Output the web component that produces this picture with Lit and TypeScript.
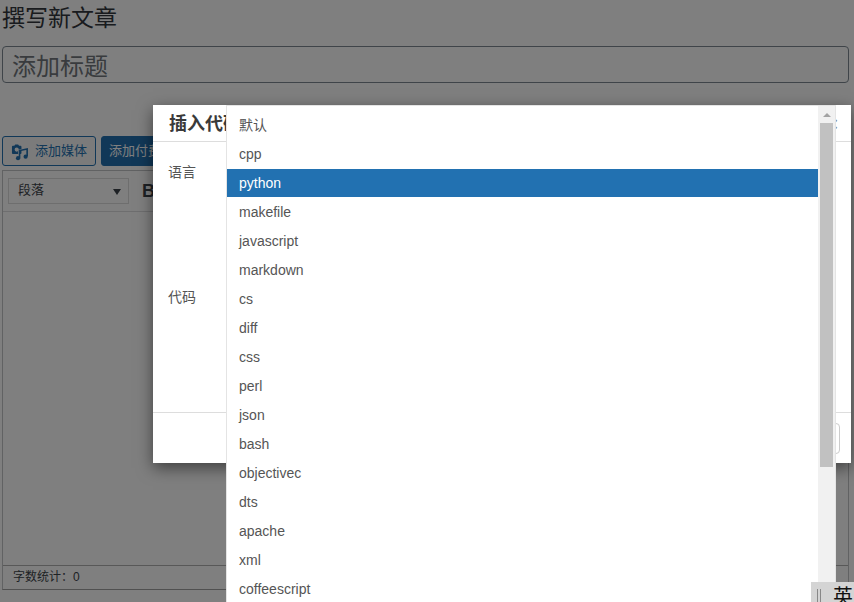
import { LitElement, html, css } from "lit";
import { customElement } from "lit/decorators.js";

const LANGS = ["默认","cpp","python","makefile","javascript","markdown","cs","diff","css","perl","json","bash","objectivec","dts","apache","xml","coffeescript"];

@customElement("app-root")
export class AppRoot extends LitElement {
  static styles = css`
    :host { display:block; position:relative; width:854px; height:602px; overflow:hidden; background:#fff;
      font-family:"Liberation Sans","Noto Sans CJK SC",sans-serif; color:#32373c; }
    * { box-sizing:border-box; }
    .page { padding:0 5px 0 2px; display:flex; flex-direction:column; height:602px; }
    h1 { margin:0; font-weight:400; font-size:23px; line-height:36px; height:46px; }
    .title { height:37px; border:1px solid #7e8993; border-radius:4px; font-size:24px; line-height:40px; padding-left:9px; color:#72777c; }
    .media { display:flex; gap:5px; margin-top:53px; height:30px; }
    .btn { height:30px; border:1px solid #2271b1; border-radius:3px; font-size:13px; line-height:28px; color:#2271b1; background:#f6f7f7; display:flex; align-items:center; }
    .btn.a { width:94px; padding-left:8px; gap:5px; }
    .btn.a svg { flex:none; }
    .btn.b { width:120px; padding-left:7px; background:#2271b1; color:#fff; }
    .editor { margin-top:4px; width:847px; height:420px; border:1px solid #c3c4c7; border-bottom-color:#a0a0a0; display:flex; flex-direction:column; }
    .tools { height:41px; border-bottom:1px solid #dcdcde; padding:7px 0 0 5px; display:flex; gap:13px; }
    .sel { width:121px; height:26px; border:1px solid #ddd; padding-left:9px; font-size:13px; line-height:21px; color:#3c434a; position:relative; }
    .sel::after { content:""; position:absolute; right:7px; top:10px; border:4px solid transparent; border-top:6px solid #3c434a; border-bottom:0; }
    .bold { font-weight:700; font-size:18px; line-height:26px; color:#3c434a; }
    .body { flex:1; }
    .status { height:24px; border-top:1px solid #b0b0b0; font-size:12px; line-height:23px; padding-left:10px; color:#3c434a; }
    .scrim { position:absolute; inset:0; background:rgba(0,0,0,.5); }
    .modal { position:absolute; left:153px; top:105px; width:698px; height:358px; background:#fff; box-shadow:0 5px 15px rgba(0,0,0,.5); display:flex; flex-direction:column; color:#555; }
    .mh { height:37px; border-bottom:1px solid #ddd; padding:1px 13px 0 16px; font-size:18px; font-weight:700; line-height:36px; color:#3a3a3a; display:flex; justify-content:space-between; }
    .mh span:last-child { font-size:21px; color:#888; }
    .mb { flex:1; padding:20px 15px; font-size:14px; line-height:20px; color:#555; display:flex; flex-direction:column; gap:105px; }
    .mf { height:51px; border-top:1px solid #ddd; display:flex; justify-content:flex-end; padding:10px 11px 0 0; }
    .cancel { width:40px; height:31px; border:1px solid #ccc; border-radius:4px; background:#fff; }
    .dd { position:absolute; left:226px; top:105px; width:610px; height:500px; background:#fff; border:1px solid #e4e4e4; border-width:1px 1px 0 1px; display:flex; }
    ul { list-style:none; margin:0; padding:5px 0 0; flex:1; }
    li { height:28px; margin-bottom:1px; padding-left:12px; font-size:14px; line-height:28px; color:#555; }
    li.on { background:#2271b1; color:#fff; }
    .sb { width:17px; background:#f1f1f1; padding:0 2px; display:flex; flex-direction:column; align-items:center; }
    .up { height:17px; display:flex; align-items:center; justify-content:center; width:100%; }
    .up i { border:4px solid transparent; border-bottom:4px solid #a3a3a3; border-top:0; width:0; display:block; }
    .thumb { width:13px; height:344px; background:#c1c1c1; }
    .ime { position:absolute; left:811px; top:582px; width:43px; height:20px; background:#d4d4d4; color:#111; display:flex; padding-left:6px; overflow:hidden; }
    .grip { width:4px; height:14px; margin-top:7px; border-left:1px solid #888; border-right:1px solid #888; }
    .ime b { font-weight:400; font-size:20px; line-height:30px; margin-left:12px; white-space:nowrap; }
  `;
  render() {
    return html`
      <div class="page">
        <h1>撰写新文章</h1>
        <div class="title">添加标题</div>
        <div class="media">
          <div class="btn a">
            <svg width="19" height="19" viewBox="0 0 20 20">
              <path fill="#2271b1" fill-rule="evenodd" d="M4.5 2.5h3l1 1.5h1.5a1 1 0 0 1 1 1v6.5a1 1 0 0 1-1 1H2a1 1 0 0 1-1-1V5a1 1 0 0 1 1-1h1.5zM6 5.8a2.2 2.2 0 1 0 0 4.4a2.2 2.2 0 0 0 0-4.4z"/>
              <path fill="none" stroke="#f6f7f7" stroke-width="1.4" d="M8.2 18V8.6L18 6.6V16"/>
              <path fill="none" stroke="#2271b1" stroke-width="1.7" d="M9 17V9l8-1.6V15"/>
              <circle cx="7.4" cy="17" r="2.2" fill="#2271b1"/>
              <circle cx="15.4" cy="15.4" r="2.2" fill="#2271b1"/>
            </svg>
            <span>添加媒体</span>
          </div>
          <div class="btn b">添加付费内容</div>
        </div>
        <div class="editor">
          <div class="tools"><div class="sel">段落</div><div class="bold">B</div></div>
          <div class="body"></div>
          <div class="status">字数统计：0</div>
        </div>
      </div>
      <div class="scrim"></div>
      <div class="modal">
        <div class="mh"><span>插入代码</span><span>×</span></div>
        <div class="mb"><div>语言</div><div>代码</div></div>
        <div class="mf"><div class="cancel"></div></div>
      </div>
      <div class="dd">
        <ul>${LANGS.map(l => html`<li class=${l === "python" ? "on" : ""}>${l}</li>`)}</ul>
        <div class="sb"><div class="up"><i></i></div><div class="thumb"></div></div>
      </div>
      <div class="ime"><div class="grip"></div><b>英</b></div>
    `;
  }
}
